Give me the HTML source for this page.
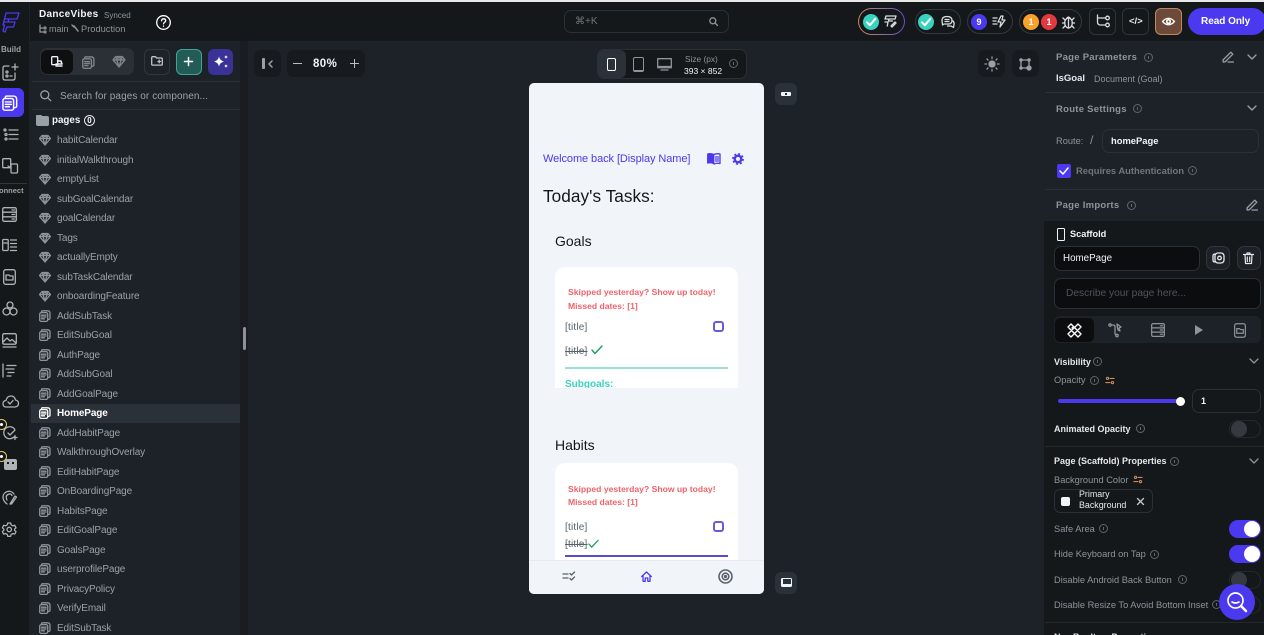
<!DOCTYPE html>
<html><head><meta charset="utf-8"><style>
html,body{margin:0;padding:0;width:1264px;height:635px;overflow:hidden;background:#1d2228;font-family:"Liberation Sans",sans-serif;color:#fff}
#r{position:relative;width:1264px;height:635px;overflow:hidden;filter:blur(.3px)}
.a{position:absolute}
.t{position:absolute;white-space:nowrap;line-height:14px}
.g{color:#8d949a}
.b{font-weight:700}
svg{position:absolute;overflow:visible;fill:none;stroke:currentColor;stroke-width:1.3;stroke-linecap:round;stroke-linejoin:round}
.li{position:absolute;left:57px;margin-top:1px;font-size:10px;line-height:14px;color:#9aa1a6;white-space:nowrap;letter-spacing:-.12px}
.pill{position:absolute;height:25px;top:9px;border:1px solid #33393f;border-radius:14px;box-sizing:border-box}
.bd{position:absolute;border-radius:50%;width:16px;height:16px;font-size:9px;font-weight:700;text-align:center;line-height:16px;color:#fff}
.sq{position:absolute;top:8px;width:27px;height:27px;border:1px solid #2e343a;border-radius:6px;box-sizing:border-box}
.dk{position:absolute;background:#171b1f;border-radius:7px}
.tg{position:absolute;left:1229px;width:32px;height:18px;border-radius:9px;background:#4b39ef}
.tg i{position:absolute;right:1px;top:1px;width:16px;height:16px;border-radius:50%;background:#fff}
.tf{position:absolute;left:1229px;width:32px;height:18px;border-radius:9px;border:1px solid #23282d;box-sizing:border-box}
.tf i{position:absolute;left:1px;top:0;width:16px;height:16px;border-radius:50%;background:#343a40}
.hr{position:absolute;left:1045px;width:219px;height:1px;background:#2b3036}
.in{position:absolute;width:9px;height:9px;border:1px solid #5f666c;border-radius:50%;box-sizing:border-box}
.in::after{content:"";position:absolute;left:3px;top:2px;width:1px;height:3px;background:#5f666c}
.f{font-size:9.3px}
.cb{position:absolute;left:158px;width:11px;height:11px;border:2px solid #6a5bd8;border-radius:3px;box-sizing:border-box}
</style></head><body><div id="r">
<svg width="0" height="0" style="position:absolute"><defs>
<symbol id="gem" viewBox="0 0 12 12"><path d="M3 1.500h6l2.500 3L6 11 .5 4.500zM.5 4.500h11M4 4.500 6 11l2-6.500M3.500 1.500 4 4.500l2-3 2 3 .5-3" fill="none"/></symbol>
<symbol id="pg" viewBox="0 0 12 12"><rect x=".7" y="2.600" width="8" height="8.800" rx="1.500" fill="none"/><path d="M2.500 5.200h4.500M2.500 7h4.500M2.500 8.800h3M2.500 2.500V1.800q0-1 1-1h5q2.500 0 2.500 2.500v5q0 1-1.500 1.200" fill="none"/></symbol>
<symbol id="dn" viewBox="0 0 10 10"><path d="M1 3l4 4 4-4" fill="none"/></symbol>
<symbol id="ed" viewBox="0 0 12 12"><path d="M1 9l.2 2 2-.2L10.800 3.200 8.800 1.200zM6 11h5.500" fill="none"/></symbol>
<symbol id="ck" viewBox="0 0 10 10"><path d="M2.500 5.200 4.300 7l3.400-4" fill="none" stroke="#fff"/></symbol>
<symbol id="vr" viewBox="0 0 12 10"><circle cx="3" cy="2.500" r="1.300" fill="none"/><path d="M6 2.500h5M1 7.500h5" fill="none"/><circle cx="9" cy="7.500" r="1.300" fill="none"/></symbol>
</defs></svg>

<!-- top bar -->
<div class="a" style="left:0;top:0;width:1264px;height:2px;background:#e8e8e8"></div>
<div class="a" style="left:0;top:2px;width:1264px;height:39px;background:#14181b"></div>
<div class="a" style="left:0;top:41px;width:29px;height:594px;background:#14181b"></div>
<div class="a" style="left:29px;top:2px;width:1px;height:633px;background:#1d2228"></div>

<svg style="left:2px;top:12px;color:#4b39ef" width="18" height="21" viewBox="0 0 18 21"><path d="M4 1h13l-2 6H7l-1 3h7l-1.500 5H5l-2 5-2-1 1.500-6H1zM4 1 2.500 7H15M6 10H2"/></svg>
<div class="t b" style="left:39px;top:8px;font-size:10px;letter-spacing:.3px;color:#f1f4f8">DanceVibes</div>
<div class="t g" style="left:104px;top:9px;font-size:8px">Synced</div>
<svg style="left:39px;top:25px;color:#8d949a" width="8" height="8" viewBox="0 0 8 8"><path d="M1 0v7h3M1 3h3"/><circle cx="6" cy="3" r="1"/><circle cx="6" cy="7" r="1"/></svg>
<div class="t g" style="left:49px;top:22px;font-size:9px">main</div>
<svg style="left:71px;top:24px;color:#8d949a" width="8" height="8" viewBox="0 0 8 8"><path d="M1 1l2 2M3 2 7 7" stroke-width="1.500"/></svg>
<div class="t g" style="left:81px;top:22px;font-size:9.300px">Production</div>
<svg style="left:156px;top:15px;color:#fff" width="15" height="15" viewBox="0 0 15 15"><circle cx="7.500" cy="7.500" r="6.800"/><path d="M5.500 5.800q.3-2 2-2 2.200 0 2.200 1.900c0 1.500-2.200 1.500-2.200 3.200M7.500 11v.3"/></svg>

<!-- search -->
<div class="a" style="left:564px;top:10px;width:165px;height:23px;border:1px solid #2b3036;border-radius:7px;box-sizing:border-box"></div>
<div class="t g" style="left:575px;top:15px;font-size:10px;color:#6f767c">&#8984;+K</div>
<svg style="left:709px;top:17px;color:#8d949a" width="9" height="9" viewBox="0 0 9 9"><circle cx="3.800" cy="3.800" r="3"/><path d="M6 6l2.500 2.500"/></svg>

<!-- top right -->
<div class="a" style="left:858px;top:8px;width:47px;height:27px;border-radius:14px;background:linear-gradient(90deg,#c98a5b,#6a4fd0);"></div>
<div class="a" style="left:859px;top:9px;width:45px;height:25px;border-radius:13px;background:#14181b"></div>
<div class="bd" style="left:863px;top:14px;background:#39d2c0"></div><svg style="left:863px;top:14px" width="16" height="16"><use href="#ck"/></svg>
<svg style="left:884px;top:15px;color:#d9dcde" width="13" height="13" viewBox="0 0 13 13"><path d="M2 1h10l-1 3H5l-.5 2h4M2 1 1 4h3M1 7h3l-.7 4M8 12l4-4-1-1-4 4z"/></svg>
<div class="pill" style="left:915px;width:46px"></div>
<div class="bd" style="left:918px;top:14px;background:#39d2c0"></div><svg style="left:918px;top:14px" width="16" height="16"><use href="#ck"/></svg>
<svg style="left:941px;top:15px;color:#d9dcde" width="14" height="13" viewBox="0 0 14 13"><path d="M1 5.500Q1 1.500 6 1.500t5 4-5 3.500H3L1.500 10zM12 6q1.500 1.500 1 3.500l-.5 3L10 11H6.500M4 4.500h4M4 6.500h4"/></svg>
<div class="pill" style="left:967px;width:46px"></div>
<div class="bd" style="left:971px;top:14px;background:#4b39ef">9</div>
<svg style="left:992px;top:15px;color:#d9dcde" width="14" height="13" viewBox="0 0 14 13"><path d="M1 3h4M1 6h3M1 9h4M9 1 6 7h3l-1 5 5-7h-3l1-4z"/></svg>
<div class="pill" style="left:1019px;width:63px"></div>
<div class="bd" style="left:1023px;top:14px;background:#f9a12a">1</div>
<div class="bd" style="left:1041px;top:14px;background:#e2393e">1</div>
<svg style="left:1062px;top:15px;color:#d9dcde" width="13" height="14" viewBox="0 0 13 14"><ellipse cx="6.500" cy="8" rx="3.800" ry="5"/><path d="M4.500 3.500Q6.500.5 8.500 3.500M6.500 4v9M1 3l2 2M12 3l-2 2M.5 8h2.500M12.500 8H10M1 13l2-2M12 13l-2-2"/></svg>
<div class="sq" style="left:1089px"></div>
<svg style="left:1096px;top:15px;color:#d9dcde" width="14" height="13" viewBox="0 0 14 13"><path d="M1.500 0v7q0 3 3 3h5M1.500 3h8"/><circle cx="11.500" cy="3" r="1.800"/><circle cx="11.500" cy="10" r="1.800"/></svg>
<div class="sq" style="left:1122px"></div>
<div class="t b" style="left:1129px;top:15px;font-size:9.500px;color:#e6e8ea">&lt;/&gt;</div>
<div class="a" style="left:1155px;top:8px;width:27px;height:27px;background:#6d4a38;border:1px solid #c08763;border-radius:6px;box-sizing:border-box"></div>
<svg style="left:1162px;top:17px;color:#fff" width="13" height="9" viewBox="0 0 13 9"><path d="M.5 4.500Q6.500-2 12.500 4.500 6.500 11 .5 4.500z"/><circle cx="6.500" cy="4.500" r="1.800" stroke-width="1.600"/></svg>
<div class="a" style="left:1188px;top:8px;width:78px;height:27px;background:#4b39ef;border-radius:14px"></div>
<div class="t b" style="left:1201px;top:15px;font-size:10px;letter-spacing:-.03px">Read Only</div>

<!-- rail -->
<div class="t" style="left:1px;top:43px;font-size:8px;font-weight:700;color:#9aa1a6">Build</div>
<svg style="left:2px;top:63px;color:#aeb3b7" width="17" height="18" viewBox="0 0 17 18"><path d="M7 3H3Q1 3 1 5v10q0 2 2 2h8q2 0 2-2V10M13 1v6M10 4h6"/><circle cx="5" cy="9" r="1"/><circle cx="5" cy="13" r="1"/><path d="M8 13h2"/></svg>
<div class="a" style="left:0;top:88px;width:24px;height:29px;background:#4b39ef;border-radius:0 6px 6px 0"></div>
<svg style="left:2px;top:95px;color:#fff;stroke-width:1.100" width="16" height="16" viewBox="0 0 12 12"><use href="#pg"/></svg>
<svg style="left:2px;top:128px;color:#aeb3b7" width="16" height="13" viewBox="0 0 16 13"><circle cx="3" cy="2" r="1"/><circle cx="4" cy="6.500" r="1"/><circle cx="4" cy="11" r="1"/><path d="M7 2h9M7 6.500h9M7 11h9"/></svg>
<svg style="left:2px;top:158px;color:#aeb3b7" width="16" height="16" viewBox="0 0 16 16"><rect x=".7" y=".7" width="8" height="9" rx="1"/><rect x="9" y="6" width="6.500" height="9" rx="1"/><path d="M6 8l3 2"/></svg>
<div class="a" style="left:0;top:183px;width:27px;height:1px;background:#30363c"></div>
<div class="t b" style="left:-1px;top:184px;font-size:7.500px;color:#9aa1a6">onnect</div>
<svg style="left:2px;top:207px;color:#aeb3b7" width="15" height="15" viewBox="0 0 15 15"><rect x=".7" y=".7" width="13.600" height="13.600" rx="1.500"/><path d="M.7 5.200h13.600M.7 9.800h13.600M10 3h2.500M10 7.500h2.500M10 12h2.500"/></svg>
<svg style="left:2px;top:238px;color:#aeb3b7" width="15" height="14" viewBox="0 0 15 14"><rect x=".7" y="1.500" width="5.500" height="11" rx="1"/><path d="M8.500 2h6M8.500 5.500h6M8.500 9h6M8.500 12.500h6M2 5h3"/></svg>
<svg style="left:3px;top:269px;color:#aeb3b7" width="13" height="16" viewBox="0 0 13 16"><rect x=".7" y=".7" width="11.600" height="14.600" rx="2"/><path d="M3 6h3l1 1h3v4H3z"/></svg>
<svg style="left:2px;top:301px;color:#aeb3b7" width="16" height="15" viewBox="0 0 16 15"><circle cx="8" cy="4" r="3"/><circle cx="4.500" cy="10.500" r="3.500"/><circle cx="11.500" cy="10.500" r="3.500"/></svg>
<svg style="left:2px;top:333px;color:#aeb3b7" width="15" height="15" viewBox="0 0 15 15"><rect x=".7" y=".7" width="13.600" height="10.500" rx="1.500"/><path d="M1 9l4-4 3 3 2-1.500L14 10M1 14h13"/></svg>
<svg style="left:2px;top:364px;color:#aeb3b7" width="15" height="13" viewBox="0 0 15 13"><path d="M1 0v13M5 1.500h9M4 5h8M6 8.500h6M5 12h4"/></svg>
<svg style="left:2px;top:395px;color:#aeb3b7" width="17" height="13" viewBox="0 0 17 13"><path d="M4 12Q1 12 1 8.500 1 5.800 4 5.500 5 1 9 1q3.500 0 4.500 4 3 .5 3 3.500T13 12zM6 7l2 2 3-3.500"/></svg>
<svg style="left:3px;top:425px;color:#aeb3b7" width="16" height="16" viewBox="0 0 16 16"><path d="M11.500 4A6 6 0 1 0 11 12M5 8l2 2 5-5M12 10.500v4M10 12.500h4"/></svg>
<div class="a" style="left:-4px;top:419px;width:11px;height:11px;border-radius:50%;background:#14181b;border:1px solid #e6c66a;box-sizing:border-box"></div><div class="a" style="left:0;top:423px;width:3px;height:3px;background:#fff;border-radius:50%"></div>
<div class="a" style="left:4px;top:459px;width:13px;height:11px;background:#aeb3b7;border-radius:2px"></div><div class="a" style="left:7px;top:462px;width:2px;height:2px;background:#14181b"></div><div class="a" style="left:12px;top:462px;width:2px;height:2px;background:#14181b"></div>
<div class="a" style="left:-4px;top:451px;width:11px;height:11px;border-radius:50%;background:#14181b;border:1px solid #e6c66a;box-sizing:border-box"></div><div class="a" style="left:0;top:455px;width:3px;height:3px;background:#fff;border-radius:50%"></div>
<svg style="left:2px;top:490px;color:#aeb3b7" width="15" height="15" viewBox="0 0 15 15"><path d="M5 14Q1 11 1 7a6 6 0 0 1 11-3M5 10Q3 6 6 4.500t4 1M8 14l5-8 1.500 1-5 7z"/></svg>
<svg style="left:2px;top:522px;color:#aeb3b7" width="15" height="15" viewBox="0 0 15 15"><path d="M6 1h3l.5 2 1.800 1 2-.6 1.300 2.600L13 7.500l0 1 1.600 1.500-1.300 2.600-2-.6-1.800 1L9 15H6l-.5-2-1.800-1-2 .6L.4 10 2 8.500v-1L.4 6l1.300-2.600 2 .6 1.800-1z" transform="scale(.96)"/><circle cx="7.200" cy="7.500" r="2.200"/></svg>

<!-- left panel -->
<div class="a" style="left:30px;top:41px;width:210px;height:594px;background:#1d2228"></div>
<div class="a" style="left:240px;top:41px;width:8px;height:594px;background:#191d21"></div>
<div class="a" style="left:243px;top:327px;width:3px;height:23px;background:#8b9196;border-radius:2px"></div>
<div class="a" style="left:40px;top:48px;width:94px;height:27px;background:#2b3036;border-radius:7px"></div>
<div class="a" style="left:41px;top:50px;width:32px;height:24px;background:#0d0f11;border-radius:6px"></div>
<svg style="left:51px;top:56px;color:#f1f4f8" width="12" height="13" viewBox="0 0 12 13"><rect x=".7" y=".7" width="6" height="8" rx="1"/><path d="M5 8h6M5 10h6M6.500 5h3.500l1 3" stroke-width="1.500"/></svg>
<svg style="left:82px;top:56px;color:#7b8288" width="13" height="13" viewBox="0 0 12 12"><use href="#pg"/></svg>
<svg style="left:112px;top:55px;color:#7b8288" width="14" height="13" viewBox="0 0 12 12"><use href="#gem"/></svg>
<div class="a" style="left:144px;top:49px;width:26px;height:26px;border:1px solid #30363c;border-radius:6px;box-sizing:border-box"></div>
<svg style="left:151px;top:56px;color:#bfc4c8" width="12" height="10" viewBox="0 0 12 10"><path d="M.7 1.500Q.7.700 1.500.700h3l1 1.300h5q.8 0 .8.800v5.500q0 .8-.8.800h-9q-.8 0-.8-.8zM7 5.500h2.500M8.200 4.200v2.600"/></svg>
<div class="a" style="left:176px;top:49px;width:26px;height:26px;background:#235b57;border:1px solid #39a89b;border-radius:6px;box-sizing:border-box"></div>
<svg style="left:184px;top:57px;color:#fff;stroke-width:1.500" width="9" height="9" viewBox="0 0 9 9"><path d="M4.500.5v8M.5 4.500h8"/></svg>
<div class="a" style="left:208px;top:49px;width:25px;height:26px;background:#3a3296;border-radius:6px"></div>
<svg style="left:213px;top:54px" width="16" height="16" viewBox="0 0 16 16"><path d="M6 2.500Q6.800 6.500 11 7.500 6.800 8.500 6 12.500 5.200 8.500 1 7.500 5.200 6.500 6 2.500zM13 1q.3 1.700 2 2-1.700.3-2 2-.3-1.700-2-2 1.700-.3 2-2zM13 10q.3 1.700 2 2-1.700.3-2 2-.3-1.700-2-2 1.700-.3 2-2z" fill="#fff" stroke="none"/></svg>
<div class="a" style="left:32px;top:81px;width:208px;height:1px;background:#2b3036"></div>
<div class="a" style="left:32px;top:109px;width:208px;height:1px;background:#2b3036"></div>
<svg style="left:40px;top:90px;color:#9aa1a6" width="11" height="11" viewBox="0 0 11 11"><circle cx="4.800" cy="4.800" r="4"/><path d="M7.800 7.800l3 3"/></svg>
<div class="t" style="left:60px;top:90px;font-size:10px;color:#9aa1a6;letter-spacing:.08px">Search for pages or componen...</div>
<div class="a" style="left:36px;top:116px;width:13px;height:10px;background:#9aa1a6;border-radius:2px"></div>
<div class="a" style="left:36px;top:115px;width:6px;height:3px;background:#9aa1a6;border-radius:1px"></div>
<div class="t b" style="left:52px;top:114px;font-size:9.800px;color:#f1f4f8">pages</div>
<div class="a" style="left:84px;top:115px;width:11px;height:11px;border:1px solid #e6e8ea;border-radius:50%;box-sizing:border-box;font-size:8px;font-weight:700;line-height:9px;text-align:center">0</div>

<div class="a" style="left:31px;top:404px;width:209px;height:19px;background:#2b3138"></div>
<svg style="left:39px;top:134px;color:#8d949a" width="12" height="12"><use href="#gem"/></svg><div class="li" style="top:133px">habitCalendar</div>
<svg style="left:39px;top:154px;color:#8d949a" width="12" height="12"><use href="#gem"/></svg><div class="li" style="top:153px">initialWalkthrough</div>
<svg style="left:39px;top:173px;color:#8d949a" width="12" height="12"><use href="#gem"/></svg><div class="li" style="top:172px">emptyList</div>
<svg style="left:39px;top:193px;color:#8d949a" width="12" height="12"><use href="#gem"/></svg><div class="li" style="top:192px">subGoalCalendar</div>
<svg style="left:39px;top:212px;color:#8d949a" width="12" height="12"><use href="#gem"/></svg><div class="li" style="top:211px">goalCalendar</div>
<svg style="left:39px;top:232px;color:#8d949a" width="12" height="12"><use href="#gem"/></svg><div class="li" style="top:231px">Tags</div>
<svg style="left:39px;top:251px;color:#8d949a" width="12" height="12"><use href="#gem"/></svg><div class="li" style="top:250px">actuallyEmpty</div>
<svg style="left:39px;top:271px;color:#8d949a" width="12" height="12"><use href="#gem"/></svg><div class="li" style="top:270px">subTaskCalendar</div>
<svg style="left:39px;top:290px;color:#8d949a" width="12" height="12"><use href="#gem"/></svg><div class="li" style="top:289px">onboardingFeature</div>
<svg style="left:39px;top:310px;color:#8d949a" width="12" height="12"><use href="#pg"/></svg><div class="li" style="top:309px">AddSubTask</div>
<svg style="left:39px;top:329px;color:#8d949a" width="12" height="12"><use href="#pg"/></svg><div class="li" style="top:328px">EditSubGoal</div>
<svg style="left:39px;top:349px;color:#8d949a" width="12" height="12"><use href="#pg"/></svg><div class="li" style="top:348px">AuthPage</div>
<svg style="left:39px;top:368px;color:#8d949a" width="12" height="12"><use href="#pg"/></svg><div class="li" style="top:367px">AddSubGoal</div>
<svg style="left:39px;top:388px;color:#8d949a" width="12" height="12"><use href="#pg"/></svg><div class="li" style="top:387px">AddGoalPage</div>
<svg style="left:39px;top:407px;color:#fff" width="12" height="12"><use href="#pg"/></svg><div class="li b" style="top:406px;color:#fff">HomePage</div>
<svg style="left:39px;top:427px;color:#8d949a" width="12" height="12"><use href="#pg"/></svg><div class="li" style="top:426px">AddHabitPage</div>
<svg style="left:39px;top:446px;color:#8d949a" width="12" height="12"><use href="#pg"/></svg><div class="li" style="top:445px">WalkthroughOverlay</div>
<svg style="left:39px;top:466px;color:#8d949a" width="12" height="12"><use href="#pg"/></svg><div class="li" style="top:465px">EditHabitPage</div>
<svg style="left:39px;top:485px;color:#8d949a" width="12" height="12"><use href="#pg"/></svg><div class="li" style="top:484px">OnBoardingPage</div>
<svg style="left:39px;top:505px;color:#8d949a" width="12" height="12"><use href="#pg"/></svg><div class="li" style="top:504px">HabitsPage</div>
<svg style="left:39px;top:524px;color:#8d949a" width="12" height="12"><use href="#pg"/></svg><div class="li" style="top:523px">EditGoalPage</div>
<svg style="left:39px;top:544px;color:#8d949a" width="12" height="12"><use href="#pg"/></svg><div class="li" style="top:543px">GoalsPage</div>
<svg style="left:39px;top:563px;color:#8d949a" width="12" height="12"><use href="#pg"/></svg><div class="li" style="top:562px">userprofilePage</div>
<svg style="left:39px;top:583px;color:#8d949a" width="12" height="12"><use href="#pg"/></svg><div class="li" style="top:582px">PrivacyPolicy</div>
<svg style="left:39px;top:602px;color:#8d949a" width="12" height="12"><use href="#pg"/></svg><div class="li" style="top:601px">VerifyEmail</div>
<svg style="left:39px;top:622px;color:#8d949a" width="12" height="12"><use href="#pg"/></svg><div class="li" style="top:621px">EditSubTask</div>

<!-- canvas toolbar -->
<div class="dk" style="left:254px;top:50px;width:27px;height:27px"></div>
<div class="a" style="left:262px;top:58px;width:3px;height:11px;background:#9aa1a6;border-radius:1px"></div>
<svg style="left:268px;top:60px;color:#9aa1a6;stroke-width:1.500" width="5" height="8" viewBox="0 0 5 8"><path d="M4 1 1 4l3 3"/></svg>
<div class="dk" style="left:287px;top:50px;width:78px;height:27px"></div>
<div class="a" style="left:293px;top:63px;width:9px;height:1px;background:#b9bdc1"></div>
<div class="t b" style="left:313px;top:57px;font-size:11.500px;color:#f1f4f8;letter-spacing:.4px">80%</div>
<div class="a" style="left:350px;top:63px;width:9px;height:1px;background:#b9bdc1"></div>
<div class="a" style="left:354px;top:59px;width:1px;height:9px;background:#b9bdc1"></div>
<div class="a" style="left:597px;top:49px;width:150px;height:30px;background:#14181b;border:1px solid #2b3036;border-radius:7px;box-sizing:border-box"></div>
<div class="a" style="left:598px;top:50px;width:28px;height:28px;background:#2b3138;border-radius:6px"></div>
<div class="a" style="left:607px;top:58px;width:9px;height:13px;border:1px solid #fff;border-radius:2px;box-sizing:border-box"></div>
<div class="a" style="left:633px;top:57px;width:11px;height:15px;border:1px solid #8d949a;border-bottom:2.500px solid #8d949a;border-radius:2px;box-sizing:border-box"></div>
<svg style="left:657px;top:58px;color:#8d949a" width="15" height="13" viewBox="0 0 15 13"><rect x=".7" y=".7" width="13.600" height="9"/><path d="M1 8.500h13M4 12h7" /></svg>
<div class="t g" style="left:685px;top:52px;font-size:8.300px">Size (px)</div>
<div class="t" style="left:684px;top:64px;font-size:8.500px;color:#f1f4f8">393 &#215; 852</div>
<div class="in" style="left:729px;top:59px"></div>

<div class="dk" style="left:978px;top:50px;width:27px;height:27px"></div>
<svg style="left:985px;top:57px;color:#9aa1a6" width="14" height="14" viewBox="0 0 14 14"><circle cx="7" cy="7" r="3" fill="#9aa1a6"/><path d="M7 0v1.500M7 12.500V14M0 7h1.500M12.500 7H14M2 2l1 1M11 11l1 1M12 2l-1 1M3 11l-1 1"/></svg>
<div class="dk" style="left:1012px;top:50px;width:27px;height:27px"></div>
<svg style="left:1019px;top:58px;color:#9aa1a6" width="13" height="13" viewBox="0 0 13 13"><path d="M2 2h8v6M2 2v8h6"/><circle cx="2" cy="2" r="1.100"/><circle cx="10" cy="2" r="1.100"/><circle cx="2" cy="10" r="1.100"/><circle cx="10" cy="10" r="2" fill="#9aa1a6"/></svg>

<div class="a" style="left:775px;top:83px;width:22px;height:22px;background:#2b3138;border-radius:6px"></div>
<div class="a" style="left:781px;top:92px;width:10px;height:4px;background:#f1f4f8;border-radius:1px"></div>
<div class="a" style="left:785px;top:93px;width:2px;height:2px;background:#2b3138"></div>
<div class="a" style="left:775px;top:572px;width:22px;height:22px;background:#2b3138;border-radius:6px"></div>
<div class="a" style="left:781px;top:578px;width:11px;height:9px;background:#f1f4f8;border-radius:1.500px"></div>
<div class="a" style="left:782.500px;top:579px;width:8px;height:5px;background:#2b3138"></div>

<!-- phone -->
<div class="a" style="left:529px;top:83px;width:235px;height:511px;background:#f1f4f8;border-radius:5px;overflow:hidden;color:#14181b">
 <div class="t" style="left:14px;top:69px;font-size:11px;color:#4b39ef;letter-spacing:-.08px">Welcome back [Display Name]</div>
 <svg style="left:178px;top:70px;color:#4b39ef" width="14" height="11" viewBox="0 0 14 11"><path d="M.7 1q3-.8 6 .5v9q-3-1.200-6-.5z" fill="#4b39ef"/><path d="M7 1.500q3-1.300 6-.5v9.500q-3-.7-6 .5M8.500 4h3M8.500 6h3M8.500 8h3"/></svg>
 <svg style="left:203px;top:70px" width="12" height="12" viewBox="0 0 12 12"><circle cx="6" cy="6" r="3.300" stroke="#4b39ef" stroke-width="2.400"/><circle cx="6" cy="6" r="5.100" stroke="#4b39ef" stroke-width="1.600" stroke-dasharray="2 2" stroke-linecap="butt"/></svg>
 <div class="t" style="left:14px;top:104px;font-size:17.200px;line-height:18px;color:#14181b;letter-spacing:.05px">Today's Tasks:</div>
 <div class="t" style="left:26px;top:150px;font-size:14px;line-height:16px;color:#14181b">Goals</div>
 <div class="a" style="left:26px;top:184px;width:183px;height:121px;background:#fff;border-radius:10px 10px 0 0;overflow:hidden">
  <div class="t b" style="left:13px;top:18px;font-size:8.600px;color:#ee636b">Skipped yesterday? Show up today!</div>
  <div class="t b" style="left:13px;top:32px;font-size:8.600px;color:#ee636b">Missed dates: [1]</div>
  <div class="t" style="left:10px;top:54px;font-size:10px;color:#57636c;letter-spacing:.2px">[title]</div>
  <div class="cb" style="top:54px"></div>
  <div class="t" style="left:10px;top:78px;font-size:10px;color:#57636c;letter-spacing:.2px;text-decoration:line-through">[title]</div>
  <svg style="left:36px;top:78px;stroke-width:1.400" width="12" height="10" viewBox="0 0 12 10"><path d="M1 5l3 3.500L11 1" stroke="#1f9e5a"/></svg>
  <div class="a" style="left:10px;top:100px;width:163px;height:2px;background:#99e0d5"></div>
  <div class="t b" style="left:10px;top:111px;font-size:10px;color:#39d2c0">Subgoals:</div>
 </div>
 <div class="t" style="left:26px;top:354px;font-size:14px;line-height:16px;color:#14181b">Habits</div>
 <div class="a" style="left:26px;top:380px;width:183px;height:120px;background:#fff;border-radius:10px 10px 0 0;overflow:hidden">
  <div class="t b" style="left:13px;top:19px;font-size:8.600px;color:#ee636b">Skipped yesterday? Show up today!</div>
  <div class="t b" style="left:13px;top:32px;font-size:8.600px;color:#ee636b">Missed dates: [1]</div>
  <div class="t" style="left:10px;top:58px;font-size:10px;color:#57636c;letter-spacing:.2px">[title]</div>
  <div class="cb" style="top:58px"></div>
  <div class="t" style="left:10px;top:75px;font-size:10px;color:#57636c;letter-spacing:.2px;text-decoration:line-through">[title]</div>
  <svg style="left:33px;top:76px;stroke-width:1.400" width="11" height="10" viewBox="0 0 12 10"><path d="M1 5l3 3.500L11 1" stroke="#1f9e5a"/></svg>
  <div class="a" style="left:10px;top:92px;width:163px;height:1.500px;background:#5a4bc9"></div>
 </div>
 <div class="a" style="left:0;top:477px;width:235px;height:34px;background:#f1f4f8;border-top:1px solid #e6e9ed;box-sizing:border-box"></div>
 <svg style="left:33px;top:488px;color:#57636c" width="13" height="10" viewBox="0 0 13 10"><path d="M1 3h5M1 7h5M8 2.500l1.500 1.500L12.500 1M8 7.500 9.500 9l3-3"/></svg>
 <svg style="left:112px;top:488px;color:#4b39ef" width="11" height="11" viewBox="0 0 11 11"><path d="M.7 5.500 5.500 1l4.800 4.500M2 4.500V10.300h2.200V7h2.600v3.300H9V4.500"/></svg>
 <svg style="left:189px;top:486px;color:#57636c;stroke-width:1.600" width="15" height="15" viewBox="0 0 15 15"><circle cx="7.500" cy="7.500" r="6.500"/><circle cx="7.500" cy="7.500" r="3.300"/><circle cx="7.500" cy="7.500" r=".8"/></svg>
</div>

<!-- right panel -->
<div class="a" style="left:1044px;top:41px;width:220px;height:180px;background:#1d2228"></div>
<div class="a" style="left:1044px;top:221px;width:220px;height:414px;background:#14181b"></div>
<div class="t b" style="left:1056px;top:51px;font-size:9.500px;color:#8d949a;letter-spacing:.27px">Page Parameters</div>
<div class="in" style="left:1144px;top:53px"></div>
<svg style="left:1222px;top:51px;color:#9aa1a6" width="12" height="12"><use href="#ed"/></svg>
<svg style="left:1247px;top:52px;color:#9aa1a6" width="10" height="10"><use href="#dn"/></svg>
<div class="t b" style="left:1056px;top:72px;font-size:9.500px;color:#e6e8ea">IsGoal</div>
<div class="t g" style="left:1094px;top:72px;font-size:9px">Document (Goal)</div>
<div class="hr" style="top:92px"></div>
<div class="t b" style="left:1056px;top:102px;font-size:9.500px;color:#8d949a;letter-spacing:.27px;margin-top:1px">Route Settings</div>
<div class="in" style="left:1133px;top:104px"></div>
<svg style="left:1247px;top:103px;color:#9aa1a6" width="10" height="10"><use href="#dn"/></svg>
<div class="t g" style="left:1056px;top:134px;font-size:9.300px">Route:</div>
<div class="t g" style="left:1090px;top:133px;font-size:12px">/</div>
<div class="a" style="left:1102px;top:129px;width:157px;height:24px;border:1px solid #2b3036;border-radius:7px;box-sizing:border-box"></div>
<div class="t b" style="left:1111px;top:134px;font-size:9.400px;color:#f1f4f8">homePage</div>
<div class="a" style="left:1057px;top:164px;width:14px;height:14px;background:#4b39ef;border-radius:2px"></div>
<svg style="left:1059px;top:166px;stroke-width:1.500" width="10" height="10" viewBox="0 0 10 10"><path d="M1 5l3 3 5-6" stroke="#fff"/></svg>
<div class="t b" style="left:1076px;top:164px;font-size:9.400px;color:#6f767c">Requires Authentication</div>
<div class="in" style="left:1188px;top:166px"></div>
<div class="hr" style="top:189px"></div>
<div class="t b" style="left:1056px;top:199px;font-size:9.500px;color:#8d949a;letter-spacing:.27px">Page Imports</div>
<div class="in" style="left:1127px;top:201px"></div>
<svg style="left:1246px;top:199px;color:#9aa1a6" width="12" height="12"><use href="#ed"/></svg>

<div class="a" style="left:1057px;top:228px;width:6px;height:11px;border:1.200px solid #f1f4f8;border-radius:1.500px"></div>
<div class="t b" style="left:1070px;top:227px;font-size:9.200px;color:#f1f4f8">Scaffold</div>
<div class="a" style="left:1054px;top:246px;width:146px;height:25px;background:#0b0d0f;border:1px solid #2b3036;border-radius:7px;box-sizing:border-box"></div>
<div class="t" style="left:1063px;top:252px;font-size:9.800px;color:#f1f4f8">HomePage</div>
<div class="a" style="left:1206px;top:246px;width:24px;height:24px;background:#1d2228;border:1px solid #30363c;border-radius:7px;box-sizing:border-box"></div>
<svg style="left:1212px;top:251px;color:#e6e8ea" width="13" height="13" viewBox="0 0 13 13"><rect x="3" y="2" width="9" height="10" rx="3"/><path d="M3 3Q1 3 1 5v4q0 2 2 2"/><circle cx="7.500" cy="7" r="1.800"/></svg>
<div class="a" style="left:1237px;top:246px;width:24px;height:24px;background:#1d2228;border:1px solid #30363c;border-radius:7px;box-sizing:border-box"></div>
<svg style="left:1243px;top:252px;color:#e6e8ea" width="11" height="12" viewBox="0 0 11 12"><path d="M.5 2.500h10M4 2.500V1h3v1.500M2 2.500l.5 9h6l.5-9M4.300 5v4.500M6.700 5v4.500" stroke-width="1.200"/></svg>
<div class="a" style="left:1054px;top:278px;width:207px;height:31px;background:#0b0d0f;border:1px solid #2b3036;border-radius:7px;box-sizing:border-box"></div>
<div class="t" style="left:1066px;top:287px;font-size:10.200px;color:#4f555b">Describe your page here...</div>
<div class="a" style="left:1054px;top:316px;width:207px;height:27px;background:#1d2228;border-radius:6px"></div>
<div class="a" style="left:1055px;top:318px;width:39px;height:24px;background:#0b0d0f;border-radius:5px"></div>
<svg style="left:1067px;top:323px;color:#fff;stroke-width:1.400" width="15" height="15" viewBox="0 0 15 15"><path d="M1 4l3-3 10 10-3 3zM11 1l3 3L4 14l-3-3zM5 5l1-1M9 9l1-1"/></svg>
<svg style="left:1108px;top:323px;color:#8d949a" width="15" height="14" viewBox="0 0 15 14"><circle cx="2" cy="2" r="1.200"/><circle cx="9" cy="12.500" r="1.200"/><path d="M3 2h2q2 0 2 2v6q0 2 1 2M9 1l4 3-2 1 1 3-2-1-1-5z"/></svg>
<svg style="left:1151px;top:323px;color:#8d949a" width="14" height="14" viewBox="0 0 15 15"><rect x=".7" y=".7" width="13.600" height="13.600" rx="1.500"/><path d="M.7 5.200h13.600M.7 9.800h13.600M10 3h2.500M10 7.500h2.500M10 12h2.500"/></svg>
<svg style="left:1195px;top:325px" width="8" height="10" viewBox="0 0 8 10"><path d="M0 0l8 5-8 5z" fill="#8d949a" stroke="none"/></svg>
<svg style="left:1234px;top:323px;color:#8d949a" width="12" height="15" viewBox="0 0 13 16"><rect x=".7" y=".7" width="11.600" height="14.600" rx="2"/><path d="M3 6h3l1 1h3v4H3z"/></svg>

<div class="t b" style="left:1054px;top:355px;font-size:9px;color:#e6e8ea">Visibility</div>
<div class="in" style="left:1093px;top:357px"></div>
<svg style="left:1249px;top:356px;color:#8d949a" width="10" height="10"><use href="#dn"/></svg>
<div class="t g f" style="left:1054px;top:373px">Opacity</div>
<div class="in" style="left:1090px;top:376px"></div>
<svg style="left:1105px;top:376px;color:#c98a5b" width="10" height="9"><use href="#vr"/></svg>
<div class="a" style="left:1058px;top:399px;width:122px;height:4px;background:#4b39ef;border-radius:2px"></div>
<div class="a" style="left:1176px;top:397px;width:9px;height:9px;background:#fff;border-radius:50%"></div>
<div class="a" style="left:1192px;top:389px;width:69px;height:24px;border:1px solid #2b3036;border-radius:7px;box-sizing:border-box"></div>
<div class="t b" style="left:1201px;top:394px;font-size:9px;color:#f1f4f8">1</div>
<div class="t b" style="left:1054px;top:422px;font-size:9px;color:#e6e8ea">Animated Opacity</div>
<div class="in" style="left:1136px;top:424px"></div>
<div class="tf" style="top:420px"><i></i></div>
<div class="hr" style="top:446px;background:#23282d"></div>
<div class="t b" style="left:1054px;top:454px;font-size:9px;color:#e6e8ea">Page (Scaffold) Properties</div>
<div class="in" style="left:1170px;top:457px"></div>
<svg style="left:1249px;top:456px;color:#8d949a" width="10" height="10"><use href="#dn"/></svg>
<div class="t g f" style="left:1054px;top:473px">Background Color</div>
<svg style="left:1133px;top:475px;color:#c98a5b" width="10" height="9"><use href="#vr"/></svg>
<div class="a" style="left:1054px;top:489px;width:99px;height:24px;border:1px solid #2b3036;border-radius:6px;box-sizing:border-box"></div>
<div class="a" style="left:1061px;top:497px;width:9px;height:9px;background:#f1f4f8;border-radius:2px"></div>
<div class="t" style="left:1079px;top:489px;font-size:8.900px;line-height:11px;color:#e6e8ea">Primary<br>Background</div>
<svg style="left:1137px;top:498px;color:#c5c9cc" width="7" height="7" viewBox="0 0 7 7"><path d="M.5.500l6 6M6.500.500l-6 6"/></svg>
<div class="t g f" style="left:1054px;top:522px">Safe Area</div>
<div class="in" style="left:1099px;top:524px"></div>
<div class="tg" style="top:520px"><i></i></div>
<div class="t g f" style="left:1054px;top:547px">Hide Keyboard on Tap</div>
<div class="in" style="left:1150px;top:550px"></div>
<div class="tg" style="top:545px"><i></i></div>
<div class="t g f" style="left:1054px;top:573px">Disable Android Back Button</div>
<div class="in" style="left:1178px;top:575px"></div>
<div class="tf" style="top:571px"><i></i></div>
<div class="t g f" style="left:1054px;top:598px">Disable Resize To Avoid Bottom Inset</div>
<div class="in" style="left:1212px;top:600px"></div>
<div class="tf" style="top:596px"><i></i></div>
<div class="hr" style="top:622px;background:#23282d"></div>
<div class="t b" style="left:1054px;top:630px;font-size:9px;color:#e6e8ea">Nav Bar Item Properties</div>
<div class="a" style="left:1219px;top:584px;width:36px;height:36px;background:#4b39ef;border-radius:50%"></div>
<svg style="left:1226px;top:591px;color:#fff;stroke-width:1.700" width="22" height="22" viewBox="0 0 22 22"><circle cx="9.500" cy="9.500" r="7.500"/><path d="M15 15l5 5" stroke-width="2.500"/><path d="M6 11q3.500 2 7 0"/></svg>
</div></body></html>
